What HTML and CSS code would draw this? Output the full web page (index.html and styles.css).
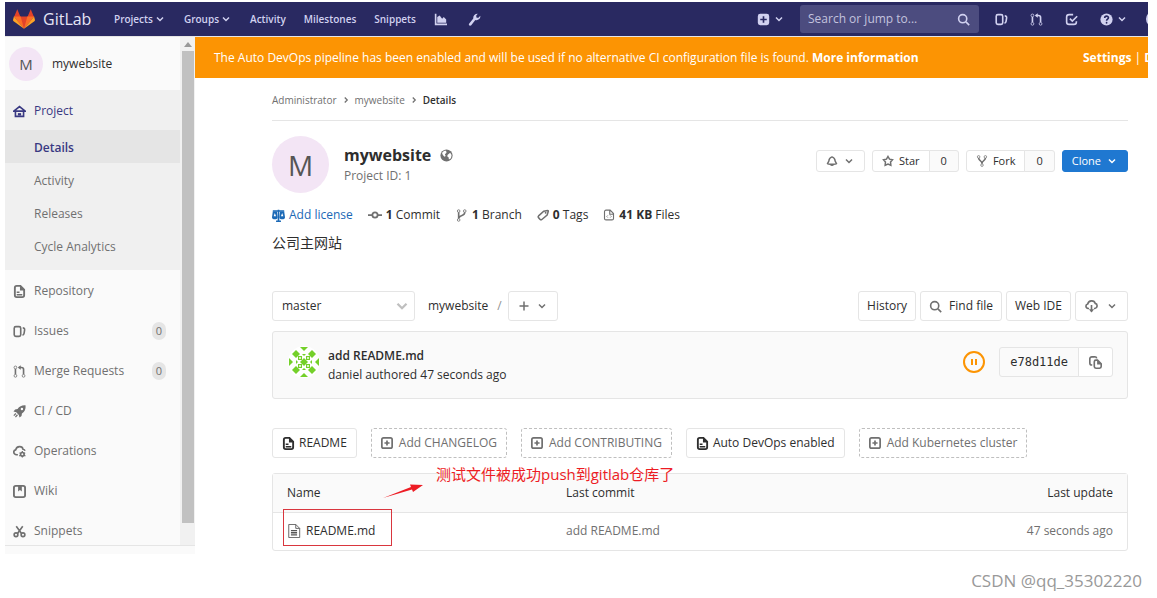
FILE: index.html
```html
<!DOCTYPE html>
<html lang="en">
<head>
<meta charset="utf-8">
<title>mywebsite · GitLab</title>
<link rel="stylesheet" href="styles.css">
</head>
<body>
<svg class="sprite" aria-hidden="true">
  <symbol id="chev" viewBox="0 0 16 16"><path class="s2" d="M4 6l4 4 4-4"/></symbol>
  <symbol id="right" viewBox="0 0 16 16"><path class="s2" d="M6 4l4 4-4 4"/></symbol>
  <symbol id="chart" viewBox="0 0 16 16"><path class="s2" d="M2 1v13h14"/><path d="M4 12V5l3-2 3 4 2-2 3 3v4z"/></symbol>
  <symbol id="wrench" viewBox="0 0 16 16"><path d="M9 8.600L4 15.200a1.700 1.700 0 0 1-2.700-2L6.500 6.900C6 3.500 8.500.6 12 .8L10 3.500l.6 2.200 2.300.2 2.200-2.400C15.800 7 12.500 9.600 9 8.600z"/></symbol>
  <symbol id="plusbox" viewBox="0 0 16 16"><path fill-rule="evenodd" d="M4 1h8a3 3 0 0 1 3 3v8a3 3 0 0 1-3 3H4a3 3 0 0 1-3-3V4a3 3 0 0 1 3-3zm3 3v3H4v2h3v3h2V9h3V7H9V4z"/></symbol>
  <symbol id="plusline" viewBox="1 1 14 14"><rect class="s2" x="2" y="2" width="12" height="12" rx="2"/><path class="s2" d="M8 5v6M5 8h6"/></symbol>
  <symbol id="plus" viewBox="0 0 16 16"><path class="s2" d="M8 2v12M2 8h12"/></symbol>
  <symbol id="search" viewBox="0 0 16 16"><circle class="s2" cx="7" cy="7" r="5"/><path class="s2" d="M11 11l4 4"/></symbol>
  <symbol id="issues" viewBox="0 0 16 16"><rect class="s2" x="1.500" y="2" width="8" height="12" rx="2"/><path class="s2" d="M12 3.500c1.500 0 2.500 1 2.300 2.500l-.6 4c-.2 1.500-.8 2.300-2 2.500"/></symbol>
  <symbol id="merge" viewBox="0 0 16 16"><circle class="s1" cx="3" cy="3" r="1.700"/><circle class="s1" cx="3" cy="13.300" r="1.700"/><circle class="s1" cx="13" cy="13.300" r="1.700"/><path class="s2" d="M3 5v6.500M13 11.500V5.500c0-1.700-.8-2.500-2.500-2.500H7"/><path d="M9.500.3v5.400L6 3z"/></symbol>
  <symbol id="todo" viewBox="0 0 16 16"><path class="s2" d="M10 2H5a3 3 0 0 0-3 3v6a3 3 0 0 0 3 3h6a3 3 0 0 0 3-3v-1M6 7l3 3 6-6"/></symbol>
  <symbol id="help" viewBox="0 0 16 16"><circle cx="8" cy="8" r="7.500"/><path class="qm" d="M5.800 6.200c0-3 4.600-3 4.600-.3 0 1.700-2.300 1.500-2.300 3.600"/><circle class="qd" cx="8.100" cy="12" r="1.100"/></symbol>
  <symbol id="home" viewBox="0 0 16 16"><path class="s2" d="M1 7.500L8 2l7 5.500zM3 8v6h10V8"/><path d="M6 10h4v3H6z"/></symbol>
  <symbol id="doc" viewBox="1 1 14 14"><path class="s2" d="M9 2H5a2 2 0 0 0-2 2v8a2 2 0 0 0 2 2h6a2 2 0 0 0 2-2V6z"/><path d="M8.500 1v6H14zM5 8h3v1.500H5zM5 10.800h6v1.400H5z"/></symbol>
  <symbol id="code" viewBox="1 0 14 16"><path class="s15" d="M9.500 1.500H4a2 2 0 0 0-2 2v9a2 2 0 0 0 2 2h8a2 2 0 0 0 2-2V6zM9 2v5h5"/><path class="s1" d="M6.500 8.500L5 10l1.500 1.500M9.500 8.500L11 10l-1.500 1.500"/></symbol>
  <symbol id="rocket" viewBox="0 0 16 16"><path fill-rule="evenodd" d="M15.500.5c.3 4.500-1 7.500-4.500 10l-.5 3-2.500 2-.8-3.200L4 9 .6 8l2-2.600 3-.4C8 1.600 11 .2 15.500.5zM11 3.500a1.500 1.500 0 1 0 0 3 1.500 1.500 0 0 0 0-3z"/><path class="s15" d="M3.500 10.500L1 13M5.500 12L3 15"/></symbol>
  <symbol id="ops" viewBox="0 0 16 16"><path class="s2" d="M6 12H4.500C0 11.500 0 6.500 3.300 6 4.500.8 11.500.8 12.300 5.200c1.300.2 2.200 1 2.500 2"/><circle class="s2" cx="11.500" cy="11.500" r="2.200"/><path class="s15" d="M11.500 7.500v2M11.500 13.500v2M8 9.500l1.800 1M13.500 12.500l1.800 1M15 9.500l-1.800 1M9.500 12.500l-1.800 1"/></symbol>
  <symbol id="wiki" viewBox="1 1 14 14"><rect class="s2" x="2" y="2" width="12" height="12" rx="2"/><path d="M6.500 2h4v6l-2-1.500-2 1.500z"/></symbol>
  <symbol id="scissors" viewBox="0 0 16 16"><circle class="s2" cx="3.700" cy="12" r="2.300"/><circle class="s2" cx="12.300" cy="12" r="2.300"/><path class="s2" d="M4 1.500l6.500 9M12 1.500l-6.500 9"/></symbol>
  <symbol id="globe" viewBox="0 0 16 16"><circle cx="8" cy="8" r="7.500"/><path class="land" d="M2.500 5C4 2.500 6 2 7.500 2.300L8 4.500 6 6.500 7 8.500 5.500 9.500 3.500 7.500zM9.500 7l3-2.500 1.800 3-.8 4-2.500 1.500L10.500 10 8.800 9z"/></symbol>
  <symbol id="scale" viewBox="0 0 16 16"><path class="s2" d="M8 1v13M1 2.500h14M5 15h6"/><path d="M1 3h5l1 7a3.500 2.500 0 0 1-7 0zM10 3h5l1 7a3.500 2.500 0 0 1-7 0z"/><path class="hole" d="M3.500 5L2 9h3zM12.500 5L11 9h3z"/></symbol>
  <symbol id="commit" viewBox="0 0 16 16"><circle class="s2" cx="8" cy="8" r="3"/><path class="s2" d="M0 8h5M11 8h5"/></symbol>
  <symbol id="branch" viewBox="0 0 16 16"><circle class="s1" cx="4.500" cy="2.500" r="1.600"/><circle class="s1" cx="12" cy="2.500" r="1.600"/><circle class="s1" cx="4.500" cy="13.500" r="1.600"/><path class="s2" d="M4.500 4v8M12 4c0 5-5 3-7 6.500"/></symbol>
  <symbol id="tag" viewBox="0 0 16 16"><path class="s2" d="M9 3l5-1c1 0 1.300.4 1 1.300L13.500 8 6.500 14c-.8.600-1.600.6-2.300-.1L2 11.500c-.7-.8-.6-1.500.1-2.300z"/><circle cx="11.500" cy="5" r="1.200"/></symbol>
  <symbol id="bell" viewBox="0 0 16 16"><path class="s2" d="M8 2.500c-3 .8-4 3-4.200 5.500L2 11.500c1 1.200 11 1.200 12 0L12.200 8C12 5.500 11 3.300 8 2.500z"/><path d="M5.500 12.500h5a2.500 2 0 0 1-5 0z"/></symbol>
  <symbol id="star" viewBox="0 0 16 16"><path class="s2" d="M8 2l2 3.600 4 .8-2.600 3 .4 4.200L8 12l-3.800 1.600.4-4.200L2 6.400l4-.8z"/></symbol>
  <symbol id="fork" viewBox="0 0 16 16"><circle class="s1" cx="3.500" cy="2.500" r="1.700"/><circle class="s1" cx="12.500" cy="2.500" r="1.700"/><circle class="s1" cx="8" cy="13.500" r="1.700"/><path class="s2" d="M3.500 4c0 4 4.500 3 4.500 7.500C8 7 12.500 8 12.500 4"/></symbol>
  <symbol id="cloud" viewBox="0 0 16 16"><path class="s2" d="M5 10.500H4C.3 10 .4 5.500 3.300 5 4.500 0 11.500 0 12.500 4.200c3.500.8 3 5.800-.5 6.300h-1M8 6v8"/><path d="M4.800 11.500h6.400L8 15.500z"/></symbol>
  <symbol id="copy" viewBox="0 0 16 16"><path class="s2" d="M4 11H3.500A2.500 2.500 0 0 1 1 8.500v-5A2.500 2.500 0 0 1 3.500 1H7a2.500 2.500 0 0 1 2.500 2"/><path class="s2" d="M10.500 5H8.500a2 2 0 0 0-2 2v6a2 2 0 0 0 2 2H13a2 2 0 0 0 2-2V9.500z"/><path d="M10 4.500v6h5.500z"/></symbol>
  <symbol id="file" viewBox="0 0 14 16"><path class="s1" d="M1 .5h8L13.500 5v10.500H1zM9 .5V5h4.500"/><path class="s15" d="M3.500 7.500h7M3.500 10h7M3.500 12.500h7"/></symbol>
</svg>

<div class="screen">
  <header class="topbar">
    <a class="brand" href="#">
      <svg viewBox="0 0 36 36" aria-hidden="true"><path fill="#e24329" d="M2 14l16 20 16-20z"/><path fill="#e24329" d="M7 2l5.500 13h-11zM29 2l5.500 13h-11z"/><path fill="#fc6d26" d="M1.500 14h11L18 34zM34.500 14h-11L18 34z"/><path fill="#fca326" d="M1.500 14L0 19.500c0 1 .3 1.500 1 2L18 34zM34.500 14l1.500 5.500c0 1-.3 1.500-1 2L18 34z"/></svg>
      <span>GitLab</span>
    </a>
    <nav class="topnav">
      <a href="#">Projects <svg class="i12"><use href="#chev"/></svg></a>
      <a href="#">Groups <svg class="i12"><use href="#chev"/></svg></a>
      <a href="#">Activity</a>
      <a href="#">Milestones</a>
      <a href="#">Snippets</a>
      <a href="#" aria-label="Instance statistics"><svg class="i13"><use href="#chart"/></svg></a>
      <a href="#" aria-label="Admin area"><svg class="i13"><use href="#wrench"/></svg></a>
    </nav>
    <a class="new" href="#" aria-label="New"><svg class="i13"><use href="#plusbox"/></svg><svg class="i12"><use href="#chev"/></svg></a>
    <label class="search"><input type="text" placeholder="Search or jump to..." aria-label="Search"><svg class="i13"><use href="#search"/></svg></label>
    <nav class="tools">
      <a href="#" aria-label="Issues"><svg class="i13"><use href="#issues"/></svg></a>
      <a href="#" aria-label="Merge requests"><svg class="i13"><use href="#merge"/></svg></a>
      <a href="#" aria-label="Todos"><svg class="i13"><use href="#todo"/></svg></a>
      <a href="#" aria-label="Help"><svg class="i13"><use href="#help"/></svg><svg class="i12"><use href="#chev"/></svg></a>
      <a class="user" href="#" aria-label="User"></a>
    </nav>
  </header>

  <div class="body">
    <aside class="side">
      <div class="scroller">
        <nav class="menu">
          <a class="context" href="#"><span class="letter">M</span>mywebsite</a>
          <div class="group">
            <a class="item active" href="#"><svg class="i13"><use href="#home"/></svg>Project</a>
            <a class="sub current" href="#">Details</a>
            <a class="sub" href="#">Activity</a>
            <a class="sub" href="#">Releases</a>
            <a class="sub" href="#">Cycle Analytics</a>
          </div>
          <a class="item" href="#"><svg class="i13"><use href="#doc"/></svg>Repository</a>
          <a class="item" href="#"><svg class="i13"><use href="#issues"/></svg>Issues<span class="count">0</span></a>
          <a class="item" href="#"><svg class="i13"><use href="#merge"/></svg>Merge Requests<span class="count">0</span></a>
          <a class="item" href="#"><svg class="i13"><use href="#rocket"/></svg>CI / CD</a>
          <a class="item" href="#"><svg class="i13"><use href="#ops"/></svg>Operations</a>
          <a class="item" href="#"><svg class="i13"><use href="#wiki"/></svg>Wiki</a>
          <a class="item" href="#"><svg class="i13"><use href="#scissors"/></svg>Snippets</a>
        </nav>
        <div class="track"><span class="up"></span><span class="thumb"></span></div>
      </div>
      <div class="collapse"></div>
    </aside>

    <main class="main">
      <div class="banner">
        <p>The Auto DevOps pipeline has been enabled and will be used if no alternative CI configuration file is found. <a href="#">More information</a></p>
        <div class="bannerlinks"><a href="#">Settings</a> | <a href="#">Dismiss</a></div>
      </div>
      <div class="content">
        <nav class="crumbs"><a href="#">Administrator</a><svg class="i10"><use href="#right"/></svg><a href="#">mywebsite</a><svg class="i10"><use href="#right"/></svg><strong>Details</strong></nav>

        <section class="project">
          <span class="avatar">M</span>
          <div class="title">
            <h1>mywebsite <svg class="i13"><use href="#globe"/></svg></h1>
            <p>Project ID: 1</p>
          </div>
          <div class="actions">
            <button class="btn small" aria-label="Notifications"><svg class="i12"><use href="#bell"/></svg><svg class="i12"><use href="#chev"/></svg></button>
            <div class="pair"><button class="btn small"><svg class="i12"><use href="#star"/></svg>Star</button><a class="btn small num" href="#">0</a></div>
            <div class="pair"><button class="btn small"><svg class="i12"><use href="#fork"/></svg>Fork</button><a class="btn small num" href="#">0</a></div>
            <button class="btn small clone">Clone<svg class="i12"><use href="#chev"/></svg></button>
          </div>
        </section>

        <nav class="stats">
          <a class="license" href="#"><svg class="i13"><use href="#scale"/></svg>Add license</a>
          <a href="#"><svg class="i14"><use href="#commit"/></svg><span><b>1</b> Commit</span></a>
          <a href="#"><svg class="i13"><use href="#branch"/></svg><span><b>1</b> Branch</span></a>
          <a href="#"><svg class="i12"><use href="#tag"/></svg><span><b>0</b> Tags</span></a>
          <a href="#"><svg class="i12"><use href="#code"/></svg><span><b>41 KB</b> Files</span></a>
        </nav>
        <p class="desc" lang="zh">公司主网站</p>

        <div class="tree">
          <span class="ref"><select aria-label="Branch"><option>master</option></select><svg class="chevbig"><use href="#chev"/></svg></span>
          <a class="path" href="#">mywebsite</a><span class="slash">/</span>
          <button class="btn" aria-label="Add to tree"><svg class="i12"><use href="#plus"/></svg><svg class="i12"><use href="#chev"/></svg></button>
          <div class="treebtns">
            <a class="btn" href="#">History</a>
            <a class="btn" href="#"><svg class="i13"><use href="#search"/></svg>Find file</a>
            <a class="btn" href="#">Web IDE</a>
            <button class="btn" aria-label="Download"><svg class="i13"><use href="#cloud"/></svg><svg class="i12"><use href="#chev"/></svg></button>
          </div>
        </div>

        <section class="commit">
          <svg class="ident" viewBox="0 0 32 32" aria-hidden="true"><circle cx="16" cy="16" r="16" fill="#fff"/><g fill="#74d02a"><path d="M12 1h8l-4 4zM12 31h8l-4-4zM1 12v8l4-4zM31 12v8l-4-4z"/><path d="M8 4l4 4-4 4-4-4zM24 4l4 4-4 4-4-4zM8 20l4 4-4 4-4-4zM24 20l4 4-4 4-4-4z"/><path d="M10 10h4v4h-4zM18 10h4v4h-4zM10 18h4v4h-4zM18 18h4v4h-4zM16 12l4 4-4 4-4-4zM14 8h4l-2 2zM14 24h4l-2-2zM8 14v4l2-2zM24 14v4l-2-2z"/></g><g fill="#fff"><circle cx="12" cy="12" r="1"/><circle cx="20" cy="12" r="1"/><circle cx="12" cy="20" r="1"/><circle cx="20" cy="20" r="1"/></g></svg>
          <div class="who"><a href="#">add README.md</a><p>daniel authored 47 seconds ago</p></div>
          <svg class="status" viewBox="0 0 22 22" role="img" aria-label="Pending"><circle cx="11" cy="11" r="10"/><path d="M9 8v6M13 8v6"/></svg>
          <div class="pair"><span class="btn sha">e78d11de</span><button class="btn" aria-label="Copy commit SHA"><svg class="i13"><use href="#copy"/></svg></button></div>
        </section>

        <nav class="quick">
          <a class="btn dark" href="#"><svg class="i13"><use href="#doc"/></svg>README</a>
          <a class="btn dashed" href="#"><svg class="i12"><use href="#plusline"/></svg>Add CHANGELOG</a>
          <a class="btn dashed" href="#"><svg class="i12"><use href="#plusline"/></svg>Add CONTRIBUTING</a>
          <a class="btn dark" href="#"><svg class="i13"><use href="#doc"/></svg>Auto DevOps enabled</a>
          <a class="btn dashed" href="#"><svg class="i12"><use href="#plusline"/></svg>Add Kubernetes cluster</a>
        </nav>

        <div class="files">
          <table>
            <thead><tr><th>Name</th><th>Last commit</th><th>Last update</th></tr></thead>
            <tbody><tr><td><a href="#"><svg class="i14"><use href="#file"/></svg>README.md</a></td><td>add README.md</td><td>47 seconds ago</td></tr></tbody>
          </table>
          <span class="mark"></span>
          <svg class="arrow" viewBox="0 0 40 16" aria-hidden="true"><path d="M0 14L28 3l-1-2.500L40 1 30 8l-1-2.500z"/></svg>
          <span class="note" lang="zh">测试文件被成功push到gitlab仓库了</span>
        </div>
      </div>
    </main>
  </div>
</div>
<footer class="credit">CSDN @qq_35302220</footer>
</body>
</html>
```
FILE: styles.css
```css
* { box-sizing: border-box; }
body { margin: 0; background: #fff; color: #2e2e2e; font: 12px/16px "Open Sans", "Noto Sans CJK SC", sans-serif; }
a { color: inherit; text-decoration: none; }
p, h1 { margin: 0; }
button, input, select { font: inherit; color: inherit; }
svg { flex: none; fill: currentColor; }
.sprite { position: absolute; width: 0; height: 0; }
.s1, .s15, .s2 { fill: none; stroke: currentColor; stroke-width: 2; }
.s1 { stroke-width: 1; }
.s15 { stroke-width: 1.5; }
.qm { fill: none; stroke: #292961; stroke-width: 2; }
.qd { fill: #292961; }
.land { fill: #fff; }
.hole { fill: #fff; }
.i10 { width: 10px; height: 10px; }
.i12 { width: 12px; height: 12px; }
.i13 { width: 13px; height: 13px; }
.i14 { width: 14px; height: 14px; }

.screen { margin: 2px 9px 0 5px; overflow: hidden; }
.topbar { display: flex; align-items: center; height: 34px; padding-left: 8px; background: #292961; color: #d1d1f0; overflow: hidden; }
.brand { display: flex; align-items: center; gap: 8px; width: 101px; font-size: 16px; color: #e6e6f7; }
.brand svg { width: 22px; height: 22px; }
.topnav { display: flex; align-items: center; gap: 18px; font-size: 10px; font-weight: 600; }
.topnav a { display: flex; align-items: center; gap: 1px; }
.topnav .i13 { margin-right: 3px; }
.new { display: flex; align-items: center; gap: 3px; margin-left: auto; margin-right: 15px; }
.search { display: flex; align-items: center; width: 179px; height: 28px; padding: 0 9px 0 8px; border-radius: 3px; background: #4c4c7f; }
.search input { flex: 1; min-width: 0; padding: 0; border: 0; background: none; outline: 0; }
.search input::placeholder { color: #c3c3de; opacity: 1; }
.tools { display: flex; align-items: center; gap: 22px; padding-left: 16px; }
.tools a { display: flex; align-items: center; gap: 3px; }
.tools .user { width: 16px; height: 16px; margin-left: -4px; margin-right: -14px; border-radius: 50%; background: #d1d1f0; }

.body { display: flex; border-top: 1px solid #e5e5e5; }
.side { display: flex; flex-direction: column; flex: none; width: 190px; background: #fafafa; color: #707070; }
.scroller { display: flex; height: 508px; overflow: hidden; }
.menu { flex: 1; }
.context { display: flex; align-items: center; gap: 9px; height: 53px; padding-left: 4px; color: #2e2e2e; }
.letter, .avatar { display: flex; align-items: center; justify-content: center; flex: none; border-radius: 50%; background: #f3e5f5; color: #555; }
.letter { width: 34px; height: 34px; font-size: 15px; }
.group { padding-bottom: 8px; background: #f0f0f0; }
.item { display: flex; align-items: center; gap: 8px; height: 40px; padding: 2px 14px 0 8px; }
.active, .current { color: #393982; font-weight: 600; }
.active { font-weight: 500; }
.sub { display: flex; align-items: center; height: 33px; padding: 2px 0 0 29px; }
.current { background: #e5e5e5; }
.count { margin-left: auto; padding: 0 4px; border-radius: 9px; background: #e5e5e5; font-size: 11px; line-height: 18px; }
.track { display: flex; flex-direction: column; align-items: center; width: 15px; background: #f1f1f1; }
.up { margin: 5px 0 4px; border: 4px solid transparent; border-top: 0; border-bottom: 5px solid #999; }
.thumb { width: 12px; height: 472px; background: #c1c1c1; }
.collapse { flex: 1; min-height: 8px; border-top: 1px solid #e5e5e5; }

.main { flex: 1; min-width: 0; }
.banner { display: flex; align-items: center; height: 41px; padding-left: 19px; background: #fc9403; color: #fff; white-space: nowrap; }
.banner a { font-weight: 700; }
.bannerlinks { width: 65px; margin-left: auto; overflow: hidden; }
.content { padding: 0 20px 3px 77px; }
.crumbs { display: flex; align-items: center; gap: 4px; height: 43px; padding-top: 2px; border-bottom: 1px solid #e5e5e5; color: #707070; font-size: 10px; }
.crumbs strong { color: #2e2e2e; font-weight: 600; }
.project { display: flex; padding-top: 15px; }
.avatar { width: 57px; height: 57px; font-size: 28px; }
.title { padding: 8px 0 0 15px; color: #707070; }
h1 { display: flex; align-items: center; gap: 9px; color: #2e2e2e; font-size: 16px; line-height: 22px; font-weight: 700; }
h1 svg { color: #707070; }
.title p { line-height: 20px; }
.actions { display: flex; gap: 7px; margin-left: auto; padding-top: 14px; }
.pair { display: flex; }
.pair .btn:first-child { border-radius: 3px 0 0 3px; }
.pair .btn:last-child { margin-left: -1px; border-radius: 0 3px 3px 0; }
.btn { display: flex; align-items: center; justify-content: center; height: 30px; padding: 0 9px; border: 1px solid #e5e5e5; border-radius: 3px; background: #fff; white-space: nowrap; gap: 7px; }
.btn svg { color: #707070; }
.btn.small { height: 22px; gap: 5px; font-size: 11px; }
.actions .num { padding: 0 11px; background: #fafafa; }
.actions > .clone { border-color: #1f78d1; background: #1f78d1; color: #fff; }
.clone svg { color: #fff; }
.stats { display: flex; gap: 15px; padding-top: 13px; line-height: 18px; }
.stats a { display: flex; align-items: center; gap: 4px; }
.stats svg { color: #707070; }
.stats .license, .license svg { color: #1b69b6; }
.desc { padding-top: 9px; font-size: 14px; line-height: 20px; }
.tree { display: flex; align-items: center; padding-top: 38px; }
.ref { display: flex; align-items: center; position: relative; width: 143px; margin-right: 13px; }
.ref select { width: 100%; height: 30px; padding: 0 9px; border: 1px solid #e5e5e5; border-radius: 3px; background: #fff; appearance: none; }
.chevbig { position: absolute; right: 4px; width: 18px; height: 18px; color: #bfbfbf; pointer-events: none; }
.slash { padding: 0 6px 0 9px; color: #919191; }
.tree > .btn { gap: 6px; }
.treebtns { display: flex; gap: 4px; margin-left: auto; }
.treebtns .btn { padding: 0 8px; }
.treebtns button.btn { gap: 8px; padding: 0 9px; }
.commit { display: flex; align-items: center; height: 68px; margin-top: 10px; padding: 0 14px 6px 15px; border: 1px solid #e5e5e5; border-radius: 3px; background: #fafafa; }
.ident { width: 32px; height: 32px; margin-right: 8px; }
.who { padding-top: 6px; line-height: 19px; }
.who a { font-weight: 600; }
.status { width: 22px; height: 22px; margin: 0 14px 0 auto; fill: none; stroke: #fc9403; stroke-width: 2; }
.sha { background: #fafafa; font-family: "DejaVu Sans Mono", monospace; }
.commit .btn { padding: 0 10px; }
.quick { display: flex; gap: 14px; padding: 29px 0 15px; }
.quick .btn { gap: 4px; }
.dark svg { color: #2e2e2e; }
.quick .dashed { gap: 6px; border: 1px dashed #bfbfbf; color: #707070; }
.files { position: relative; border: 1px solid #e5e5e5; border-radius: 3px; }
table { width: 100%; border-collapse: collapse; table-layout: fixed; }
th, td { height: 38px; padding: 0 14px; text-align: left; font-weight: 400; }
th { background: #fafafa; border-bottom: 1px solid #e5e5e5; }
th:first-child { width: 279px; }
th:last-child, td:last-child { text-align: right; }
td { color: #707070; }
td a { display: flex; align-items: center; gap: 5px; color: #2e2e2e; }
td svg { color: #555; }
.mark { position: absolute; left: 10px; top: 35px; width: 109px; height: 37px; border: 1px solid #d9363e; }
.arrow { position: absolute; left: 110px; top: 10px; width: 40px; height: 16px; fill: #ed1c24; }
.note { position: absolute; left: 163px; top: -10px; color: #ed1c24; font-size: 15px; line-height: 20px; white-space: nowrap; }
.credit { padding: 17px 15px 0; text-align: right; font-size: 17px; line-height: 20px; color: #999; }
```
